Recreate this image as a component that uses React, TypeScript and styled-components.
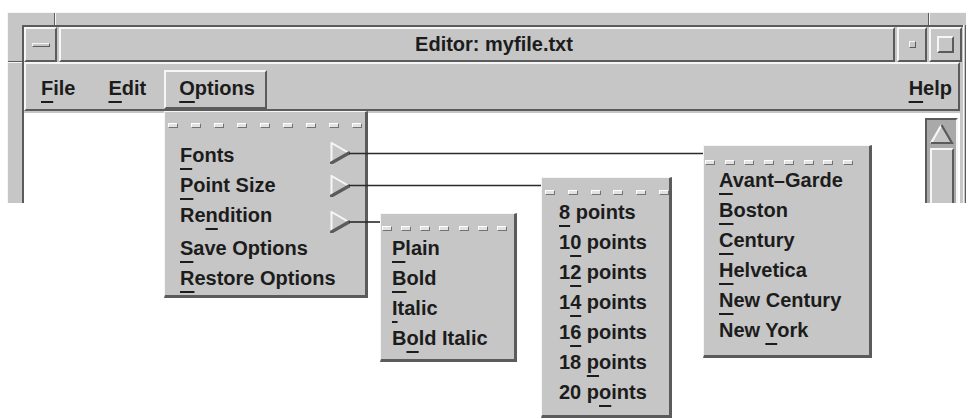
import React from "react";
import styled, { createGlobalStyle, css } from "styled-components";

const GRAY = "#c6c6c6";
const LIGHT = "#f6f6f6";
const DARK = "#5b5b5b";
const INK = "#1c1c1c";

const GlobalStyle = createGlobalStyle`
  html, body { margin: 0; padding: 0; background: #ffffff; }
  body { font-family: "Liberation Sans", Arial, Helvetica, sans-serif; }
  * { box-sizing: border-box; }
`;

const raised = css`
  border-style: solid;
  border-width: 2px;
  border-color: ${LIGHT} ${DARK} ${DARK} ${LIGHT};
`;

const Page = styled.div`
  position: relative;
  width: 968px;
  height: 419px;
  overflow: hidden;
  background: #ffffff;
`;

const Window = styled.div`
  margin: 12px 0 0 7px;
  width: 959px;
  height: 191px;
  overflow: hidden;
  background: ${GRAY};
  display: grid;
  grid-template-columns: 14px 1fr 3px;
  grid-template-rows: 12px 1fr;
  border-top: 1px solid ${LIGHT};
  border-left: 1px solid ${LIGHT};
`;

const TopEdge = styled.div`
  grid-column: 1 / -1;
  display: flex;
`;

const EdgeSeg = styled.div<{ $w?: number }>`
  flex: ${(p) => (p.$w ? `0 0 ${p.$w}px` : "1")};
  border-right: 1px solid ${DARK};
  border-left: 1px solid ${LIGHT};
  &:first-child { border-left: none; }
  &:last-child { border-right: none; }
`;

const LeftEdge = styled.div`
  display: flex;
  flex-direction: column;
`;

const LeftCorner = styled.div`
  height: 37px;
  border-bottom: 1px solid ${DARK};
  box-shadow: 0 1px 0 ${LIGHT};
`;

const RightEdge = styled.div`
  border-left: 1px solid ${LIGHT};
  border-right: 1px solid ${DARK};
`;

const Inner = styled.div`
  display: flex;
  flex-direction: column;
  border-top: 2px solid ${DARK};
  border-left: 2px solid ${DARK};
  padding-right: 1px;
  min-height: 0;
`;

const TitleRow = styled.div`
  display: flex;
  gap: 2px;
  height: 35px;
  flex: 0 0 35px;
`;

const TitleButton = styled.div<{ $w: number }>`
  ${raised};
  flex: 0 0 ${(p) => p.$w}px;
  display: flex;
  align-items: center;
  justify-content: center;
`;

const Knob = styled.div<{ $w: number; $h: number }>`
  width: ${(p) => p.$w}px;
  height: ${(p) => p.$h}px;
  border: 1px solid;
  border-color: ${LIGHT} ${DARK} ${DARK} ${LIGHT};
  border-width: ${(p) => (p.$h > 8 ? "2px" : "1px")};
  background: ${GRAY};
`;

const TitleBar = styled.div`
  ${raised};
  flex: 1;
  display: flex;
  align-items: center;
  justify-content: center;
  font-size: 20px;
  font-weight: bold;
  color: ${INK};
  padding: 0 0 1px 34px;
`;

const MenuBar = styled.div`
  ${raised};
  height: 49px;
  flex: 0 0 49px;
  margin-right: 2px;
  display: flex;
  align-items: flex-end;
  gap: 6px;
`;

const MenuItem = styled.div<{ $active?: boolean; $end?: boolean }>`
  height: 39px;
  display: flex;
  align-items: center;
  padding: 0 ${(p) => (p.$end ? 4 : 10)}px 3px 13px;
  margin-left: ${(p) => (p.$end ? "auto" : "0")};
  border: 2px solid transparent;
  ${(p) => p.$active && raised};
  font-size: 20px;
  font-weight: bold;
  color: ${INK};
  line-height: 30px;
`;

const ClientArea = styled.div`
  flex: 1;
  margin-top: 2px;
  margin-right: 2px;
  background: #ffffff;
  display: flex;
  justify-content: flex-end;
  align-items: flex-start;
`;

const ScrollBar = styled.div`
  margin-top: 5px;
  margin-right: 2px;
  width: 33px;
  height: 120px;
  background: #a9a9a9;
  border: 2px solid;
  border-color: ${DARK} ${LIGHT} ${LIGHT} ${DARK};
  padding: 3px 2px;
  display: flex;
  flex-direction: column;
  align-items: center;
  gap: 3px;
`;

const Slider = styled.div`
  ${raised};
  width: 24px;
  height: 70px;
  background: ${GRAY};
`;

const Popup = styled.div<{ $x: number; $y: number; $w: number; $pb: number }>`
  position: absolute;
  left: ${(p) => p.$x}px;
  top: ${(p) => p.$y}px;
  width: ${(p) => p.$w}px;
  background: ${GRAY};
  border-top: 1px solid ${LIGHT};
  border-left: 1px solid ${LIGHT};
  border-right: 3px solid ${DARK};
  border-bottom: 3px solid ${DARK};
  padding-bottom: ${(p) => p.$pb}px;
`;

const TearOff = styled.div<{ $mt: number; $mb: number; $pl: number; $pr: number }>`
  display: flex;
  justify-content: space-between;
  height: 5px;
  margin: ${(p) => `${p.$mt}px 0 ${p.$mb}px`};
  padding: ${(p) => `0 ${p.$pr}px 0 ${p.$pl}px`};
  overflow: hidden;
`;

const Dash = styled.span`
  flex: 0 0 10px;
  height: 5px;
  background: #e2e2e2;
  border: 1px solid #727272;
  border-top-color: #ffffff;
  border-left-color: #ffffff;
`;

const Row = styled.div<{ $h: number; $pl: number }>`
  display: flex;
  align-items: flex-start;
  height: ${(p) => p.$h}px;
  padding: 0 15px 0 ${(p) => p.$pl}px;
  font-size: 20px;
  font-weight: bold;
  line-height: 30px;
  color: ${INK};
  white-space: nowrap;
`;

const Cascade = styled.svg<{ $dy: number }>`
  margin-left: auto;
  margin-top: ${(p) => p.$dy}px;
  flex: 0 0 20px;
`;

const U = styled.span`
  text-decoration: underline;
  text-decoration-thickness: 2px;
  text-underline-offset: 6px;
  text-decoration-skip-ink: none;
`;

const Wires = styled.svg`
  position: absolute;
  left: 0;
  top: 0;
  pointer-events: none;
`;

type Item = { label: string; mn: number; h?: number; arrow?: number };

type MenuSpec = {
  x: number;
  y: number;
  w: number;
  pb: number;
  pl: number;
  dashes: number;
  tear: [number, number, number, number];
  items: Item[];
};

function Label({ text, mn }: { text: string; mn: number }) {
  return (
    <span>
      {text.slice(0, mn)}
      <U>{text[mn]}</U>
      {text.slice(mn + 1)}
    </span>
  );
}

function Arrow({ dy }: { dy: number }) {
  return (
    <Cascade $dy={dy} width="20" height="22" viewBox="0 0 20 22">
      <polyline points="1.5,21 1.5,1 19,11" fill="none" stroke={LIGHT} strokeWidth="2" />
      <line x1="19" y1="11" x2="1.5" y2="21" stroke={DARK} strokeWidth="3.2" strokeLinecap="round" />
    </Cascade>
  );
}

function Menu({ spec }: { spec: MenuSpec }) {
  const [mt, mb, tpl, tpr] = spec.tear;
  return (
    <Popup $x={spec.x} $y={spec.y} $w={spec.w} $pb={spec.pb}>
      <TearOff $mt={mt} $mb={mb} $pl={tpl} $pr={tpr}>
        {Array.from({ length: spec.dashes }).map((_, i) => (
          <Dash key={i} />
        ))}
      </TearOff>
      {spec.items.map((it) => (
        <Row key={it.label} $h={it.h ?? 30} $pl={spec.pl}>
          <Label text={it.label} mn={it.mn} />
          {it.arrow !== undefined && <Arrow dy={it.arrow} />}
        </Row>
      ))}
    </Popup>
  );
}

const optionsMenu: MenuSpec = {
  x: 164, y: 111, w: 204, pb: 2, pl: 15, dashes: 9, tear: [11, 12, 3, 3],
  items: [
    { label: "Fonts", mn: 0, arrow: 2 },
    { label: "Point Size", mn: 0, arrow: 5 },
    { label: "Rendition", mn: 2, arrow: 11, h: 33 },
    { label: "Save Options", mn: 0 },
    { label: "Restore Options", mn: 0 },
  ],
};

const renditionMenu: MenuSpec = {
  x: 380, y: 213, w: 137, pb: 6, pl: 11, dashes: 7, tear: [12, 2, 1, 7],
  items: [
    { label: "Plain", mn: 0 },
    { label: "Bold", mn: 0 },
    { label: "Italic", mn: 0 },
    { label: "Bold Italic", mn: 1 },
  ],
};

const pointMenu: MenuSpec = {
  x: 541, y: 177, w: 131, pb: 8, pl: 17, dashes: 6, tear: [12, 2, 3, 0],
  items: [
    { label: "8 points", mn: 0 },
    { label: "10 points", mn: 1 },
    { label: "12 points", mn: 1 },
    { label: "14 points", mn: 1 },
    { label: "16 points", mn: 1 },
    { label: "18 points", mn: 3 },
    { label: "20 points", mn: 4 },
  ],
};

const fontsMenu: MenuSpec = {
  x: 703, y: 145, w: 169, pb: 10, pl: 15, dashes: 8, tear: [14, 0, 1, 16],
  items: [
    { label: "Avant–Garde", mn: 0 },
    { label: "Boston", mn: 0 },
    { label: "Century", mn: 0 },
    { label: "Helvetica", mn: 0 },
    { label: "New Century", mn: 0 },
    { label: "New York", mn: 4 },
  ],
};

const menuBar = [
  { label: "File", mn: 0 },
  { label: "Edit", mn: 0 },
  { label: "Options", mn: 0, active: true },
];

export default function App() {
  return (
    <>
      <GlobalStyle />
      <Page>
        <Window>
          <TopEdge>
            <EdgeSeg $w={47} />
            <EdgeSeg />
            <EdgeSeg $w={37} />
          </TopEdge>
          <LeftEdge>
            <LeftCorner />
          </LeftEdge>
          <Inner>
            <TitleRow>
              <TitleButton $w={33}>
                <Knob $w={18} $h={4} />
              </TitleButton>
              <TitleBar>Editor: myfile.txt</TitleBar>
              <TitleButton $w={30}>
                <Knob $w={7} $h={7} />
              </TitleButton>
              <TitleButton $w={33}>
                <Knob $w={17} $h={17} />
              </TitleButton>
            </TitleRow>
            <MenuBar>
              {menuBar.map((m) => (
                <MenuItem key={m.label} $active={m.active}>
                  <Label text={m.label} mn={m.mn} />
                </MenuItem>
              ))}
              <MenuItem $end>
                <Label text="Help" mn={0} />
              </MenuItem>
            </MenuBar>
            <ClientArea>
              <ScrollBar>
                <svg width="25" height="22" viewBox="0 0 25 22">
                  <polygon points="12.5,2 23,20 2,20" fill={GRAY} />
                  <polyline points="2,20 12.5,2" fill="none" stroke={LIGHT} strokeWidth="2.2" />
                  <polyline points="12.5,2 23,20 2,20" fill="none" stroke={DARK} strokeWidth="2.2" />
                </svg>
                <Slider />
              </ScrollBar>
            </ClientArea>
          </Inner>
          <RightEdge />
        </Window>

        <Menu spec={optionsMenu} />
        <Menu spec={renditionMenu} />
        <Menu spec={pointMenu} />
        <Menu spec={fontsMenu} />

        <Wires width="968" height="419" viewBox="0 0 968 419">
          <g stroke="#2a2a2a" strokeWidth="1.6">
            <line x1="349" y1="153.5" x2="703" y2="153.5" />
            <line x1="349" y1="185.5" x2="541" y2="185.5" />
            <line x1="349" y1="222" x2="380" y2="222" />
          </g>
        </Wires>
      </Page>
    </>
  );
}
